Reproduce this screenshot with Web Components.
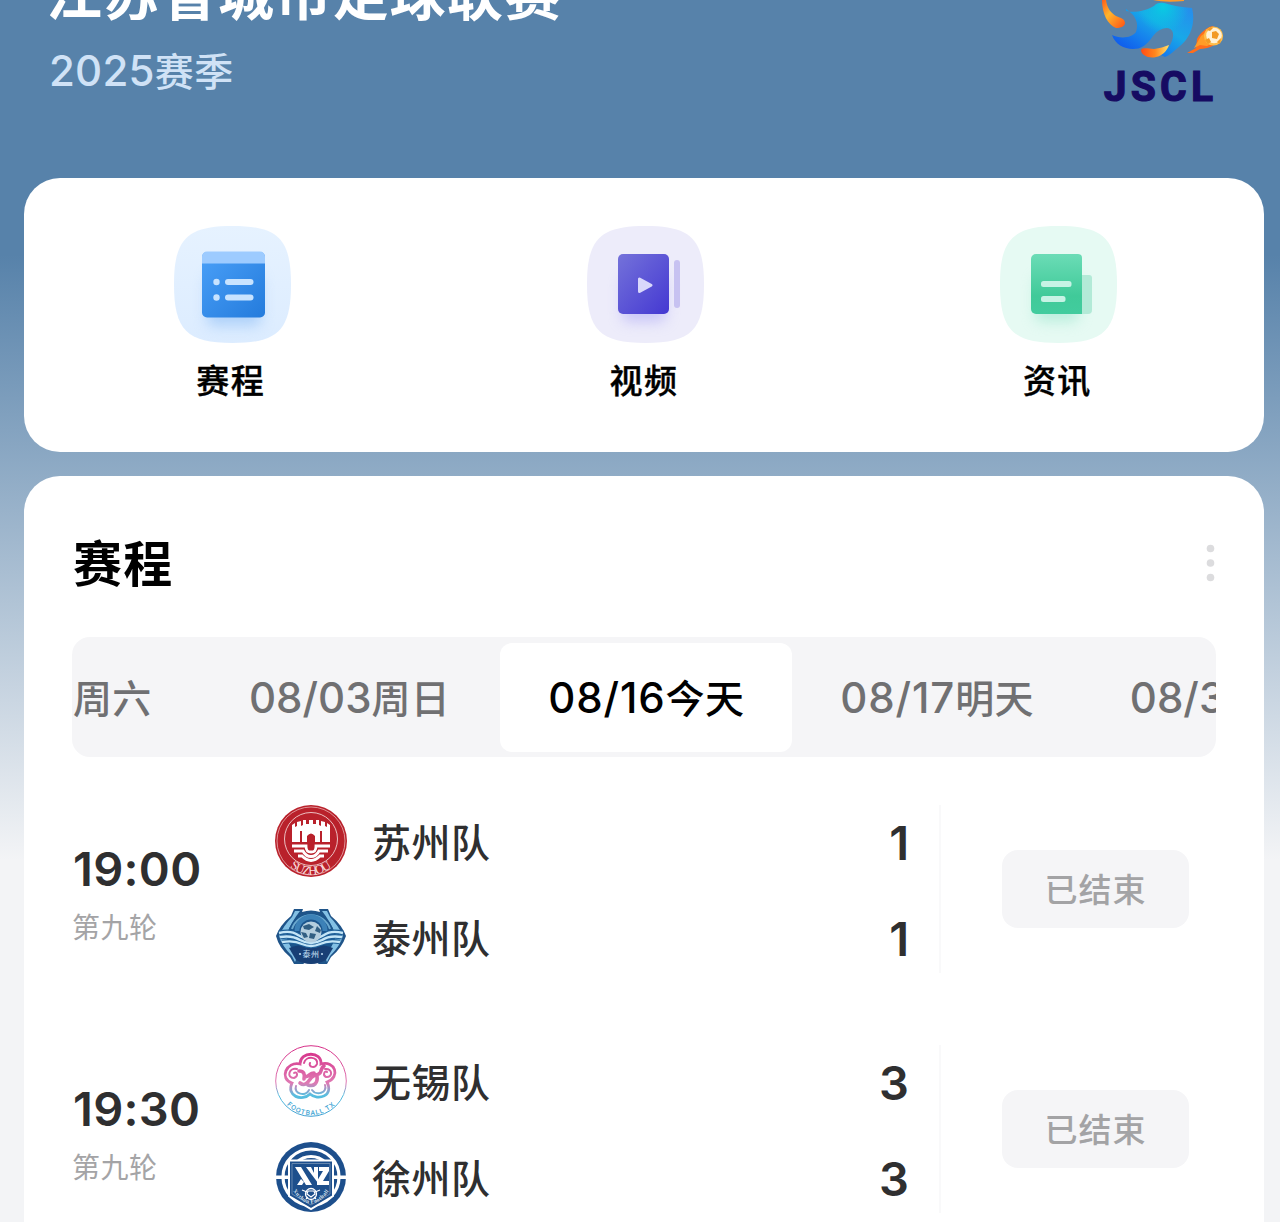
<!DOCTYPE html>
<html lang="zh-CN">
<head>
<meta charset="utf-8">
<title>江苏省城市足球联赛</title>
<style>
html, body {
  margin: 0;
  height: 1222px;
  overflow: hidden;
}

body {
  font-family: Inter, "Noto Sans CJK SC", sans-serif;
  font-weight: 500;
  color: #000;
}
</style>
</head>
<body>
<league-page>
  <league-header slot="header" season="2025">
    江苏省城市足球联赛
    <league-logo slot="logo"></league-logo>
  </league-header>
  <nav-card slot="nav">
    <nav-item icon="schedule">赛程</nav-item>
    <nav-item icon="video">视频</nav-item>
    <nav-item icon="news">资讯</nav-item>
  </nav-card>
  <schedule-card heading="赛程">
    <date-tabs slot="tabs">
      <date-tab date="">周六</date-tab>
      <date-tab date="08/03">周日</date-tab>
      <date-tab date="08/16" active>今天</date-tab>
      <date-tab date="08/17">明天</date-tab>
      <date-tab date="08/3"></date-tab>
    </date-tabs>
    <match-row time="19:00" round="第九轮" status="已结束">
      <team-line crest="suzhou" score="1">苏州队</team-line>
      <team-line crest="taizhou" score="1">泰州队</team-line>
    </match-row>
    <match-row time="19:30" round="第九轮" status="已结束">
      <team-line crest="wuxi" score="3">无锡队</team-line>
      <team-line crest="xuzhou" score="3">徐州队</team-line>
    </match-row>
  </schedule-card>
</league-page>

<script>
"use strict";

class BaseElement extends HTMLElement {
  constructor() {
    super();
    this.attachShadow({ mode: 'open' });
  }

  connectedCallback() {
    this.shadowRoot.innerHTML = this._getTemplate();
  }
}

class LeaguePage extends BaseElement {
  _getTemplate() {
    return `
<style>
:host {
  box-sizing: border-box;
  display: flex;
  flex-direction: column;
  gap: 24px;
  height: 1222px;
  padding: 0 16px 0 24px;
  overflow: hidden;
  background: linear-gradient(#5782aa 0, #5782aa 255px, #f3f4f6 860px);
}
</style>
<slot name="header"></slot>
<slot name="nav"></slot>
<slot></slot>
`;
  }
}
customElements.define('league-page', LeaguePage);

class LeagueHeader extends BaseElement {
  _getTemplate() {
    return `
<style>
:host {
  display: flex;
  justify-content: space-between;
  flex: none;
  height: 154px;
  padding: 0 39px 0 25px;
}

h1 {
  margin: -45px 0 8px -3px;
  font-size: 56px;
  line-height: 80px;
  font-weight: 700;
  letter-spacing: 1.3px;
  color: #fff;
  white-space: nowrap;
}

p {
  margin: 0;
  font-size: 39px;
  line-height: 56px;
  letter-spacing: .6px;
  color: #d0e2f6;
}

span {
  font-size: 42px;
  letter-spacing: .2px;
}
</style>
<div>
  <h1><slot></slot></h1>
  <p><span>${this.getAttribute("season")}</span>赛季</p>
</div>
<slot name="logo"></slot>
`;
  }
}
customElements.define('league-header', LeagueHeader);

class LeagueLogo extends BaseElement {
  _getTemplate() {
    return `
<style>
:host { display: block; }
svg { display: block; }
</style>
<svg width="125" height="126" viewBox="1100 0 125 126">
  <defs>
    <linearGradient id="blue" x1="1" y1="0" x2="0" y2="1">
      <stop offset=".1" stop-color="#2590ec"/><stop offset=".4" stop-color="#18a9e8"/><stop offset=".62" stop-color="#1683ed"/><stop offset="1" stop-color="#0b43ec"/>
    </linearGradient>
    <radialGradient id="cyan" gradientUnits="userSpaceOnUse" cx="1163" cy="7" r="26">
      <stop stop-color="#09cbe2"/><stop offset="1" stop-color="#09cbe2" stop-opacity="0"/>
    </radialGradient>
    <linearGradient id="fire" x1="0" y1="0" x2="1" y2="0">
      <stop stop-color="#ff4b16"/><stop offset=".5" stop-color="#ff861c"/><stop offset="1" stop-color="#ffe16a"/>
    </linearGradient>
    <linearGradient id="ribbon" x1="0" y1="0" x2="1" y2="1">
      <stop stop-color="#ff5b1a"/><stop offset=".4" stop-color="#ffb52c"/><stop offset="1" stop-color="#ff5114"/>
    </linearGradient>
    <path id="body" d="M1126 11c8 2 20 0 28-5q4-4 10-3 12 4 28 5c4 16-2 30-12 38-6 5-10 9-15 11l-4-2c8-6 13-15 12-22-2-8-13-6-20 3-7 10-12 13-20 13-9 0-18-5-21-14 8 4 20 3 24-3 2-6 1-10-1-14-2-4-5-6-9-9z"/>
  </defs>
  <path d="M1102 0h4c1 8 5 13 10 16 5 2 9 3 9 7 0 3-4 5-9 5-8-3-14-14-14-28z" fill="url(#ribbon)"/>
  <path d="M1153 0h31v1c-12 1-22 1-31-1z" fill="#ff9a28"/>
  <use href="#body" fill="url(#blue)"/>
  <use href="#body" fill="url(#cyan)"/>
  <path d="M1141 50c2-3 8-1 13-1 6-1 10-2 15-4-2 6-7 11-13 12-7 2-15-2-15-7z" fill="url(#fire)"/>
  <path d="M1187 53l9-5 1-9c3-6 10-12 16-13l7 14c-4 5-12 9-20 9l-7 4z" fill="#ff6d1c"/>
  <path d="M1194 48l7-12 10-8 7 12-11 6-7-1z" fill="#ff9c27"/>
  <circle cx="1213.500" cy="36" r="9.600" fill="#ffbd4a"/>
  <circle cx="1214" cy="35.500" r="7.800" fill="#fff2d6"/>
  <path d="M1212 32l4-1 3 3-2 5-5-1zM1207 30l3-3 3 1-3 3zM1205 40l4-2 2 4-3 2zM1217 42l4-4-1 6z" fill="#f29a24"/>
  <text transform="translate(1103.800 101) scale(.95 1)" textLength="115" lengthAdjust="spacing" font-family="Roboto, sans-serif" font-weight="700" font-size="43" fill="#160b62" stroke="#160b62" stroke-width="1.200">JSCL</text>
</svg>
`;
  }
}
customElements.define('league-logo', LeagueLogo);

class NavCard extends BaseElement {
  _getTemplate() {
    return `
<style>
:host {
  box-sizing: border-box;
  display: grid;
  grid-template-columns: repeat(3, 1fr);
  flex: none;
  height: 274px;
  padding-top: 47px;
  border-radius: 36px;
  background: #fff;
}
</style>
<slot></slot>
`;
  }
}
customElements.define('nav-card', NavCard);

// Rounded tile behind each nav glyph.
const TILE = "M59.500 1C105 1 118 14 118 59.500S105 118 59.500 118 1 105 1 59.500 14 1 59.500 1z";

const NAV_ICONS = {
  schedule: `
<defs>
  <linearGradient id="g" x1="0" y1="0" x2="1" y2="1"><stop stop-color="#4aa0f8"/><stop offset="1" stop-color="#247bdc"/></linearGradient>
  <linearGradient id="t" x1="0" y1="0" x2="0" y2="1"><stop stop-color="#e6f2ff"/><stop offset="1" stop-color="#dcecff"/></linearGradient>
</defs>
<path d="${TILE}" fill="url(#t)"/>
<rect class="glow" x="34" y="50" width="54" height="51" rx="6" fill="#80b6f4"/>
<rect x="29" y="27" width="63" height="65.500" rx="5" fill="url(#g)"/>
<path d="M29 38.500v-7a5 5 0 0 1 5-5h53a5 5 0 0 1 5 5v7z" fill="#9dcbff"/>
<g fill="#c8e3ff"><circle cx="43.500" cy="57" r="3.200"/><circle cx="43.500" cy="72.500" r="3.200"/><rect x="52" y="54" width="28.500" height="6" rx="3"/><rect x="52" y="69.500" width="28.500" height="6" rx="3"/></g>`,
  video: `
<defs><linearGradient id="g" x1="0" y1="0" x2="1" y2="1"><stop stop-color="#7472da"/><stop offset="1" stop-color="#4438d2"/></linearGradient></defs>
<path d="${TILE}" fill="#edecfa"/>
<rect class="glow" x="36" y="52" width="44" height="45" rx="6" fill="#a7a2f5"/>
<rect x="32" y="29" width="51" height="60" rx="5" fill="url(#g)"/>
<rect x="88" y="35" width="6" height="48" rx="3" fill="#c7c2f1"/>
<path d="M53.500 54v12.500l11.500-6.300z" fill="#d9d8fb" stroke="#d9d8fb" stroke-width="3" stroke-linejoin="round"/>`,
  news: `
<defs><linearGradient id="g" x1="0" y1="0" x2="0" y2="1"><stop stop-color="#6bdcb6"/><stop offset=".7" stop-color="#40ca99"/><stop offset="1" stop-color="#42cc9e"/></linearGradient></defs>
<path d="${TILE}" fill="#e6faf3"/>
<rect class="glow" x="36" y="52" width="44" height="45" rx="6" fill="#91e3c8"/>
<path d="M82 50h8a3 3 0 0 1 3 3v32a4 4 0 0 1-4 4H76z" fill="#b3ead7"/>
<path d="M37 29h42a4 4 0 0 1 4 4v56H37a5 5 0 0 1-5-5V34a5 5 0 0 1 5-5z" fill="url(#g)"/>
<g fill="#c7f3e5"><rect x="42" y="56" width="30.500" height="6" rx="2.500"/><rect x="42" y="71" width="24.500" height="6" rx="2.500"/></g>`
};

class NavItem extends BaseElement {
  _getTemplate() {
    return `
<style>
:host {
  display: flex;
  flex-direction: column;
  align-items: center;
  font-size: 33px;
  line-height: 48px;
  letter-spacing: 1.4px;
}

svg { display: block; margin: 0 0 13px 3px; }
div { -webkit-text-stroke: .4px; }
.glow { filter: blur(7px); opacity: .5; }
</style>
<svg width="119" height="119" viewBox="0 0 119 119">${NAV_ICONS[this.getAttribute("icon")]}</svg>
<div><slot></slot></div>
`;
  }
}
customElements.define('nav-item', NavItem);

class ScheduleCard extends BaseElement {
  _getTemplate() {
    return `
<style>
:host {
  display: block;
  flex: none;
  height: 800px;
  padding: 0 48px;
  border-radius: 36px;
  background: #fff;
}

header {
  display: flex;
  align-items: center;
  justify-content: space-between;
  height: 161px;
}

h2 {
  margin: 16px 0 0 1px;
  font-size: 49px;
  line-height: 72px;
  font-weight: 700;
  letter-spacing: 1.300px;
}

svg { margin-top: 12px; }

.matches { padding-top: 12px; }
</style>
<header>
  <h2>${this.getAttribute("heading")}</h2>
  <svg width="12" height="40" viewBox="0 0 12 40" fill="#dcdcde"><circle cx="6.500" cy="5.500" r="3.800"/><circle cx="6.500" cy="20" r="3.800"/><circle cx="6.500" cy="34.500" r="3.800"/></svg>
</header>
<slot name="tabs"></slot>
<div class="matches"><slot></slot></div>
`;
  }
}
customElements.define('schedule-card', ScheduleCard);

class DateTabs extends BaseElement {
  _getTemplate() {
    return `
<style>
:host {
  display: flex;
  align-items: center;
  height: 120px;
  border-radius: 18px;
  background: #f5f5f7;
  overflow: hidden;
}
</style>
<slot></slot>
`;
  }
}
customElements.define('date-tabs', DateTabs);

class DateTab extends BaseElement {
  _getTemplate() {
    return `
<style>
:host {
  box-sizing: border-box;
  display: block;
  flex: none;
  height: 109px;
  padding: 0 48px;
  border-radius: 12px;
  font-size: 39px;
  line-height: 110px;
  letter-spacing: .3px;
  color: #707072;
  white-space: nowrap;
}

/* First tab: its date is scrolled out, only the weekday is left. */
:host([date=""]) {
  width: 130px;
  padding: 0 0 0 1px;
}

:host([date="08/03"]) {
  padding: 0 50px 0 47px;
}

:host([active]) {
  background: #fff;
  color: #000;
}

span { font-size: 42px; }

/* Dates with a 1 are narrower, so they are tracked a little wider. */
span.wide { letter-spacing: .9px; }
span.tight { letter-spacing: 0; }
</style>
<span class="${this.getAttribute("date").includes("1") ? "wide" : "tight"}">${this.getAttribute("date")}</span><slot></slot>
`;
  }
}
customElements.define('date-tab', DateTab);

class MatchRow extends BaseElement {
  _getTemplate() {
    return `
<style>
:host {
  display: grid;
  grid-template-columns: 203px 666px 1fr;
  align-items: center;
  height: 240px;
}

.when { padding: 12px 0 0 1px; }

time {
  display: block;
  font-size: 47px;
  line-height: 56px;
  font-weight: 600;
  letter-spacing: .3px;
  color: #2f2f30;
}

small {
  display: block;
  margin: 10px 0 0 -1px;
  font-size: 28px;
  line-height: 42px;
  font-weight: 400;
  letter-spacing: .5px;
  color: #a4a4a6;
}

.teams {
  display: flex;
  flex-direction: column;
  gap: 24px;
  border-right: 2px solid #f9f9fa;
}

.status {
  box-sizing: border-box;
  justify-self: center;
  width: 187px;
  height: 78px;
  margin-left: 34px;
  padding-top: 1px;
  border-radius: 16px;
  background: #f5f5f7;
  font-size: 33px;
  line-height: 78px;
  letter-spacing: 1px;
  text-align: center;
  color: #a3a3a5;
}
</style>
<div class="when"><time>${this.getAttribute("time")}</time><small>${this.getAttribute("round")}</small></div>
<div class="teams"><slot></slot></div>
<div class="status">${this.getAttribute("status")}</div>
`;
  }
}
customElements.define('match-row', MatchRow);

const CRESTS = {
  suzhou: `
<circle cx="36" cy="36" r="36" fill="#b9212b"/>
<circle cx="36" cy="36" r="34" fill="none" stroke="#e8adb0" stroke-width=".8"/>
<circle cx="36" cy="34" r="26.500" fill="none" stroke="#edc0c2" stroke-width="1"/>
<path d="M17 37V20l3-2v4l2-1v-4l4-1v5l2-1v-5h3v4h3v-4h4v4h3v-4h3v5l2 1v-5l4 1v4l2 1v-4l3 2v17h-8V26h-2v11h-5V31q-4-5-8 0v6h-5V26h-2v11z" fill="#fff"/>
<path d="M17 41h14c0 4 1 6 5 6s5-2 5-6h14M19 46h9c2 4 4 5.500 8 5.500s6-1.500 8-5.500h9M23 51h4c3 3 5 4.500 9 4.500s6-1.500 9-4.500h4" fill="none" stroke="#fff" stroke-width="2.800"/>
<path id="arc" d="M5 48A33 33 0 0 0 67 48" fill="none"/>
<text font-family="Liberation Serif, serif" font-size="12.500" fill="#f9dedf" text-anchor="middle"><textPath href="#arc" startOffset="50%" textLength="46">SUZHOU</textPath></text>`,
  taizhou: `
<path d="M19 8h9l-1 3q9-3 18 0l-1-3h9l3 7q11 9 15 20-4 12-15 21l-4 7H43l1-2q-8 3-16 0l1 2H19l-4-7Q4 47 1 35 5 24 16 15z" fill="#1f5489"/>
<path d="M20 10h5Q17 20 11 34q3 12 12 20l-3 7-3-6Q7 45 4 35q5-11 13-19zM52 10h-5q8 10 14 24-3 12-12 20l3 7 3-6q10-10 13-20-5-11-13-19z" fill="#83c0e4"/>
<circle cx="36" cy="35" r="23" fill="#1c568d"/>
<path d="M17 28a20 20 0 0 1 38 0" fill="none" stroke="#6ba9cf" stroke-width="2"/>
<path d="M22 30a14 14 0 0 1 28 0" fill="none" stroke="#3c81b7" stroke-width="5"/>
<path d="M14 47q22-8 44 0l-7 12q-15 8-30 0z" fill="#183f75"/>
<path d="M4 32q12-3 19 2 13 8 26 0 7-5 19-2M5 36q12-2 20 3 11 6 22 0 7-5 20-3M7 41q12-2 20 2 9 4 18 0 8-4 20-2" fill="none" stroke="#1f6199" stroke-width="4.500"/>
<path d="M4 32q12-3 19 2 13 8 26 0 7-5 19-2M5 36q12-2 20 3 11 6 22 0 7-5 20-3M7 41q12-2 20 2 9 4 18 0 8-4 20-2" fill="none" stroke="#c4e6f7" stroke-width="2.400"/>
<circle cx="36" cy="31" r="10.500" fill="#b4cede"/>
<path d="M28 25l6-2 5 3-5 3-5-1zM42 25l4 4-1 3-5-2zM26 31l5 1 2 4-4 1zM35 32l6 1-2 5-5-1z" fill="#315f83"/>
<text x="36" y="56" font-family="Noto Sans CJK SC, sans-serif" font-size="8" fill="#b7d4eb" text-anchor="middle">泰州</text>
<circle cx="25" cy="53" r="1.100" fill="#b7d4eb"/><circle cx="47" cy="53" r="1.100" fill="#b7d4eb"/>`,
  wuxi: `
<defs>
  <linearGradient id="w" gradientUnits="userSpaceOnUse" x1="0" y1="4" x2="0" y2="72"><stop stop-color="#d62f88"/><stop offset=".5" stop-color="#df79b3"/><stop offset=".68" stop-color="#58bfe0"/><stop offset="1" stop-color="#3e9fd2"/></linearGradient>
</defs>
<circle cx="36" cy="36" r="35.300" fill="#fff" stroke="url(#w)"/>
<g fill="none" stroke="url(#w)" stroke-linecap="round">
  <path d="M25 19c0-13 22-13 21 0 14-4 20 13 6 18 7 14-9 19-17 12-8 8-24 2-18-11-13-4-6-22 8-19z" stroke-width="2.800"/>
  <path d="M29 18c2-8 15-6 13 1-2 5-9 3-7-1M50 24c8-1 8 9 1 8-4-2-1-7 1-5M22 24c-8-2-11 9-3 9 5-2 3-7 0-5M21 41c-3 8 10 11 13 4M50 40c3 8-9 11-13 5" stroke-width="2"/>
  <path d="M24 26c5 0 6 3 5 8M25 38c5 4 8-1 11-5 4-5 7-2 9-5 2-4 1-5 4-7M30 32c6-1 4-4 9-4M33 40c6 2 10-2 9-9" stroke-width="3.600"/>
</g>
<path id="arc" d="M4.500 48A33.500 33.500 0 0 0 67.500 48" fill="none"/>
<text font-family="Inter, sans-serif" font-weight="600" font-size="6.500" fill="#4aa8d5" text-anchor="middle"><textPath href="#arc" startOffset="50%" textLength="54">FOOTBALL TX</textPath></text>`,
  xuzhou: `
<circle cx="36" cy="36" r="35" fill="#1d4f8c"/>
<g fill="none" stroke="#fff"><circle cx="36" cy="36" r="28" stroke-width="3.200"/><circle cx="36" cy="36" r="20.500" stroke-width="3"/></g>
<path d="M0 34.500h14v3.500H0zM58 34.500h14v3.500H58z" fill="#fff"/>
<path d="M14 19.500h44V55L36 68 14 55z" fill="#1d4f8c" stroke="#fff" stroke-width="2"/>
<path d="M17 22.500h38V53L36 64 17 53z" fill="none" stroke="#7694b8" stroke-width=".8"/>
<path d="M20 26h6l11 18h-6zM31 26h5l3 6v-6h4v16zM44 26h10v4l-6 10h6v4H42v-4l6-10h-4zM26 38l3 3-2 3h-5z" fill="#fff"/>
<circle cx="36" cy="53" r="5.500" fill="none" stroke="#fff" stroke-width="1.300"/>
<path d="M33 50h6l1 3-4 3-4-3zM27 49l5 2M45 49l-5 2M31 58l2-2M41 58l-2-2" fill="#1d4f8c" stroke="#fff" stroke-width="1.200"/>
<path id="arc" d="M16 47Q36 78 56 47" fill="none"/>
<text font-family="Liberation Serif, serif" font-weight="700" font-size="5.500" fill="#dbe5f0" text-anchor="middle"><textPath href="#arc" startOffset="50%" textLength="46">Xuzhou Football</textPath></text>`
};

class TeamLine extends BaseElement {
  _getTemplate() {
    return `
<style>
:host {
  display: grid;
  grid-template-columns: 72px 1fr auto;
  align-items: center;
  column-gap: 25px;
  height: 72px;
  padding-right: 30px;
  font-size: 39px;
  letter-spacing: .5px;
  line-height: 56px;
  color: #2f2f30;
}

svg { display: block; }

div { margin-top: 4px; }

b {
  margin-top: 3px;
  font-size: 47px;
  font-weight: 600;
  letter-spacing: 0;
}
</style>
<svg width="72" height="72" viewBox="0 0 72 72">${CRESTS[this.getAttribute("crest")]}</svg>
<div><slot></slot></div>
<b>${this.getAttribute("score")}</b>
`;
  }
}
customElements.define('team-line', TeamLine);
</script>
</body>
</html>
